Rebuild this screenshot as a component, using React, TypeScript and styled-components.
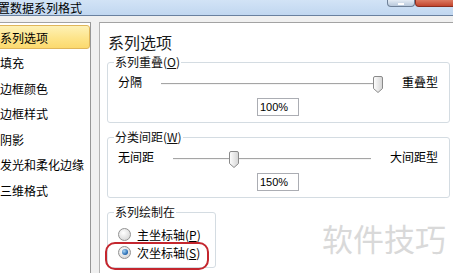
import React from "react";
import styled, { createGlobalStyle } from "styled-components";

const GlobalStyle = createGlobalStyle`
  html, body {
    margin: 0;
    padding: 0;
  }
  body {
    width: 453px;
    height: 273px;
    overflow: hidden;
    background: #f0f0f0;
    color: #000;
    font-family: "Noto Sans CJK SC", "Liberation Sans", sans-serif;
    font-size: 12px;
  }
  * {
    box-sizing: border-box;
  }
`;

const Window = styled.div`
  position: relative;
  width: 453px;
  height: 273px;
  display: flex;
  flex-direction: column;
  overflow: hidden;
`;

const TitleBar = styled.div`
  height: 16px;
  flex-shrink: 0;
  display: flex;
  align-items: flex-end;
  background: linear-gradient(#d2e3f6, #c1d7f0);
  border-bottom: 1px solid #6a819f;
`;

const Title = styled.div`
  margin-left: -14px;
  font-size: 12px;
  line-height: 15px;
  white-space: nowrap;
`;

const Controls = styled.div`
  margin-left: auto;
  margin-right: -4px;
  align-self: flex-start;
  display: flex;
`;

const ControlButton = styled.div<{ $close?: boolean }>`
  width: ${(p) => (p.$close ? 42 : 28)}px;
  height: 7px;
  border: 1px solid ${(p) => (p.$close ? "#8a2d1f" : "#6f8198")};
  border-top: none;
  border-radius: 0 0 4px 4px;
  background: ${(p) =>
    p.$close
      ? "linear-gradient(#dc7a62, #c2452d)"
      : "linear-gradient(#e4ecf5, #b8c8db)"};
  display: flex;
  justify-content: center;
  align-items: flex-end;
  padding-bottom: 1px;

  &::after {
    content: "";
    width: 6px;
    height: 2px;
    background: #fff;
    display: ${(p) => (p.$close ? "none" : "block")};
  }
`;

const Body = styled.div`
  flex: 1;
  min-height: 0;
  display: flex;
  gap: 8px;
  padding-top: 6px;
`;

const NavPanel = styled.div`
  width: 91px;
  flex-shrink: 0;
  background: #fff;
  border-top: 1px solid #a3a3a3;
  border-right: 1px solid #969696;
  padding-top: 2px;
`;

const NavItem = styled.div<{ $active?: boolean }>`
  height: 24px;
  margin: 0 0 1.5px -4px;
  padding-left: 3px;
  display: flex;
  align-items: center;
  white-space: nowrap;
  border: 1px solid ${(p) => (p.$active ? "#e0b65a" : "transparent")};
  border-radius: 3px;
  background: ${(p) =>
    p.$active ? "linear-gradient(#fef1b6, #fde48a 55%, #fbd96e)" : "transparent"};
`;

const OptionsPanel = styled.div`
  flex: 1;
  margin-right: -10px;
  background: #fff;
  border-top: 1px solid #a3a3a3;
  border-left: 1px solid #b3b3b3;
  padding: 9px 0 0 7px;
`;

const Heading = styled.div`
  margin-left: 1px;
  font-size: 16px;
  line-height: 20px;
  color: #1a1a1a;
`;

const Group = styled.fieldset<{ $width: number; $gap: number }>`
  width: ${(p) => p.$width}px;
  min-width: 0;
  margin: ${(p) => p.$gap}px 0 0 0;
  padding: 6px 11px 6px 6px;
  border: 1px solid #d4dce2;
  border-radius: 3px;
`;

const GroupLegend = styled.legend`
  padding: 0 1px;
  font-size: 12px;
  line-height: 14px;
  color: #111;
`;

const SliderRow = styled.div`
  display: flex;
  align-items: flex-start;
  gap: 19px;
  height: 18px;
  padding-left: 4px;
`;

const EndLabel = styled.span`
  line-height: 14px;
  white-space: nowrap;
`;

const Track = styled.div`
  position: relative;
  flex: 1;
  height: 18px;

  &::before {
    content: "";
    position: absolute;
    left: 0;
    right: 0;
    top: 8px;
    height: 1px;
    background: #a5a5a5;
    box-shadow: 0 1px 0 #f4f4f4;
  }
`;

const Thumb = styled.svg`
  position: absolute;
  top: 1px;
  width: 10px;
  height: 17px;
`;

const ValueBox = styled.div`
  width: 42px;
  height: 18px;
  margin: 5px 0 0 143px;
  border: 1px solid #abadb3;
  padding-left: 2px;
  font-family: "Liberation Sans", Arial, sans-serif;
  font-size: 11px;
  line-height: 16px;
  background: #fff;
`;

const RadioRow = styled.div`
  position: relative;
  display: flex;
  align-items: center;
  gap: 6px;
  height: 18px;
  padding-left: 4px;
`;

const RadioDot = styled.span<{ $checked?: boolean }>`
  width: 13px;
  height: 13px;
  border-radius: 50%;
  border: 1px solid #929292;
  background: radial-gradient(circle at 40% 35%, #ffffff, #dadada 75%);
  display: flex;
  align-items: center;
  justify-content: center;

  &::after {
    content: "";
    width: 6px;
    height: 6px;
    border-radius: 50%;
    background: radial-gradient(circle at 35% 35%, #a8d6f7, #1d63ad 70%);
    display: ${(p) => (p.$checked ? "block" : "none")};
  }
`;

const Highlight = styled.div`
  position: absolute;
  left: -9px;
  top: -1px;
  width: 104px;
  height: 28px;
  border: 2px solid #c4262e;
  border-radius: 10px;
  pointer-events: none;
`;

const Watermark = styled.div`
  position: absolute;
  left: 322px;
  top: 222px;
  font-size: 31px;
  line-height: 31px;
  color: #d9d9d9;
  white-space: nowrap;
`;

const navItems = ["系列选项", "填充", "边框颜色", "边框样式", "阴影", "发光和柔化边缘", "三维格式"];

function Slider({ left, right, ratio }: { left: string; right: string; ratio: number }) {
  return (
    <SliderRow>
      <EndLabel>{left}</EndLabel>
      <Track>
        <Thumb
          viewBox="0 0 10 17"
          style={{ left: `calc(${ratio} * (100% - 10px))` }}
        >
          <defs>
            <linearGradient id="thumbFill" x1="0" y1="0" x2="1" y2="0">
              <stop offset="0" stopColor="#ffffff" />
              <stop offset="1" stopColor="#d4d4d4" />
            </linearGradient>
          </defs>
          <path
            d="M0.5 2 Q0.5 0.5 2 0.5 H8 Q9.5 0.5 9.5 2 V12.5 L5 16.5 L0.5 12.5 Z"
            fill="url(#thumbFill)"
            stroke="#8a8a8a"
          />
        </Thumb>
      </Track>
      <EndLabel>{right}</EndLabel>
    </SliderRow>
  );
}

export default function App() {
  return (
    <>
      <GlobalStyle />
      <Window>
        <TitleBar>
          <Title>设置数据系列格式</Title>
          <Controls>
            <ControlButton />
            <ControlButton $close />
          </Controls>
        </TitleBar>
        <Body>
          <NavPanel>
            {navItems.map((item, i) => (
              <NavItem key={item} $active={i === 0}>
                {item}
              </NavItem>
            ))}
          </NavPanel>
          <OptionsPanel>
            <Heading>系列选项</Heading>
            <Group $width={343} $gap={3}>
              <GroupLegend>
                系列重叠(<u>O</u>)
              </GroupLegend>
              <Slider left="分隔" right="重叠型" ratio={1} />
              <ValueBox>100%</ValueBox>
            </Group>
            <Group $width={343} $gap={7}>
              <GroupLegend>
                分类间距(<u>W</u>)
              </GroupLegend>
              <Slider left="无间距" right="大间距型" ratio={0.3} />
              <ValueBox>150%</ValueBox>
            </Group>
            <Group $width={109} $gap={7}>
              <GroupLegend>系列绘制在</GroupLegend>
              <RadioRow>
                <RadioDot />
                <span>
                  主坐标轴(<u>P</u>)
                </span>
              </RadioRow>
              <RadioRow>
                <RadioDot $checked />
                <span>
                  次坐标轴(<u>S</u>)
                </span>
                <Highlight />
              </RadioRow>
            </Group>
          </OptionsPanel>
        </Body>
        <Watermark>软件技巧</Watermark>
      </Window>
    </>
  );
}
